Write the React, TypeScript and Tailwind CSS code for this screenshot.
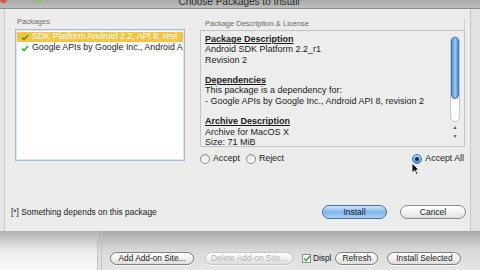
import React from "react";

const font = "font-['Liberation_Sans','Helvetica',sans-serif]";

function Radio({ checked = false, className = "" }: { checked?: boolean; className?: string }) {
  return checked ? (
    <span className={`w-[10px] h-[10px] rounded-full border border-[#3a6fb3] bg-gradient-to-b from-[#b9dcf7] to-[#4b93dc] flex items-center justify-center shrink-0 ${className}`}>
      <span className="w-[4px] h-[4px] rounded-full bg-[#1d2a3a]" />
    </span>
  ) : (
    <span className={`w-[10px] h-[10px] rounded-full border border-[#8d8d8d] bg-gradient-to-b from-[#e2e2e2] to-[#ffffff] shrink-0 ${className}`} />
  );
}

function Check({ white = false }: { white?: boolean }) {
  return (
    <svg width="8" height="7" viewBox="0 0 8 7" className="shrink-0">
      <path d="M1 3.5 L3 5.5 L7 1" fill="none" stroke={white ? "#5b9a12" : "#3fa83a"} strokeWidth="1.6" />
    </svg>
  );
}

function AquaButton({ children, w, disabled = false }: { children: React.ReactNode; w: string; disabled?: boolean }) {
  return (
    <div
      className={`${w} h-[13px] rounded-full border ${disabled ? "border-[#c4c4c4] text-[#b4b4b4]" : "border-[#7d7d7d] text-[#1a1a1a]"} bg-gradient-to-b from-[#ffffff] via-[#f1f1f1] to-[#dcdcdc] flex items-center justify-center text-[8.3px] leading-none shadow-[0_1px_0_rgba(255,255,255,0.7)]`}
    >
      {children}
    </div>
  );
}

export default function App() {
  return (
    <div className={`w-[480px] h-[270px] overflow-hidden relative bg-[#dedede] ${font} text-[#1a1a1a]`}>
      {/* Title bar (cut off) */}
      <div className="h-[9px] relative overflow-hidden bg-gradient-to-b from-[#a9a9a9] to-[#bdbdbd] border-b border-[#8f8f8f] flex justify-center">
        <div className="absolute left-[0px] top-[-4px] w-[7px] h-[7px] rounded-full bg-[#d9534f]" />
        <div className="absolute left-[35px] top-[-4px] w-[7px] h-[7px] rounded-full bg-[#8fc16b]" />
        <span className="text-[10px] leading-none text-[#2a2a2a] -mt-[3px] ml-[-2px]">Choose Packages to Install</span>
      </div>

      {/* Dialog */}
      <div className="h-[222px] flex">
        <div className="w-[4px] bg-[#e6e6e6]" />
        <div className="w-[467px] bg-[#ececec] border-x border-[#c9c9c9] flex flex-col">
          <div className="h-[155px] mt-[9px] flex">
            {/* Packages */}
            <div className="w-[170px] ml-[10px] flex flex-col">
              <div className="h-[11px] pl-[2px] text-[7.5px] leading-[8px] text-[#6a6a6a]">Packages</div>
              <div className="h-[132px] bg-white border border-[#a8bccd] shadow-[inset_0_0_0_1px_#dbe7f0] pt-[2px] px-[1px] flex flex-col">
                <div className="h-[10px] bg-[#f3c546] flex items-center gap-[3px] pl-[4px] text-[8.8px] text-white whitespace-nowrap overflow-hidden">
                  <Check white />
                  <span>SDK Platform Android 2.2, API 8, revi</span>
                </div>
                <div className="h-[12px] flex items-center gap-[3px] pl-[4px] text-[8.8px] whitespace-nowrap overflow-hidden">
                  <Check />
                  <span>Google APIs by Google Inc., Android A</span>
                </div>
              </div>
            </div>

            {/* Description */}
            <div className="w-[265px] ml-[15px] flex flex-col">
              <div className="h-[12px] pl-[5px] pt-[2px] text-[7.5px] leading-[8px] text-[#6a6a6a] border-r border-[#d6d6d6]">
                Package Description &amp; License
              </div>
              <div className="h-[117px] border border-[#c4c4c4] bg-[#ededed] flex">
                <div className="flex-1 pl-[4px] pt-[3px] text-[9px] leading-[10.3px] whitespace-nowrap overflow-hidden">
                  <div className="font-bold underline">Package Description</div>
                  <div>Android SDK Platform 2.2_r1</div>
                  <div>Revision 2</div>
                  <div>&nbsp;</div>
                  <div className="font-bold underline">Dependencies</div>
                  <div>This package is a dependency for:</div>
                  <div>- Google APIs by Google Inc., Android API 8, revision 2</div>
                  <div>&nbsp;</div>
                  <div className="font-bold underline">Archive Description</div>
                  <div>Archive for MacOS X</div>
                  <div>Size: 71 MiB</div>
                </div>
                <div className="w-[10px] mr-[4px] pt-[5px] pb-[4px] flex flex-col">
                  <div className="flex-1 rounded-full bg-white border border-[#c8c8c8] flex flex-col">
                    <div className="h-[62px] rounded-full bg-gradient-to-r from-[#4f8fd6] via-[#9ccaf3] to-[#4f8fd6] border border-[#3f74b3]" />
                  </div>
                  <div className="h-[20px] flex flex-col items-center justify-center gap-[4px] text-[5px] leading-none text-[#555]">
                    <span>▲</span>
                    <span>▼</span>
                  </div>
                </div>
              </div>
              <div className="h-[12px] mt-[6px] flex items-center text-[8.8px]">
                <Radio />
                <span className="ml-[3px]">Accept</span>
                <Radio className="ml-[6px]" />
                <span className="ml-[3px]">Reject</span>
                <Radio checked className="ml-auto" />
                <span className="ml-[3px] mr-[1px]">Accept All</span>
              </div>
            </div>
          </div>

          <div className="h-[16px] mt-[31px] flex items-center">
            <span className="ml-[6px] text-[8.4px]">[*] Something depends on this package</span>
            <div className="ml-auto flex gap-[13px] mr-[4px]">
              <div className="w-[65px] h-[14px] rounded-full border border-[#4a6f9e] bg-gradient-to-b from-[#cfe6fb] via-[#7fb7ec] to-[#a9d3f7] flex items-center justify-center text-[8.5px] leading-none">
                Install
              </div>
              <div className="w-[66px] h-[14px] rounded-full border border-[#8a8a8a] bg-gradient-to-b from-white via-[#f3f3f3] to-[#dedede] flex items-center justify-center text-[8.5px] leading-none">
                Cancel
              </div>
            </div>
          </div>
        </div>
        <div className="flex-1 bg-[#e2e2e2]" />
      </div>

      {/* Background window */}
      <div className="h-[39px] flex bg-gradient-to-b from-[#a8a8a8] via-[#dadada] to-[#e6e6e6]">
        <div className="w-[98px] bg-gradient-to-b from-[#b0b0b0] via-[#ececec] to-[#fafafa] border-r border-[#c4c4c4]" />
        <div className="w-[4px] border-r border-[#c4c4c4]" />
        <div className="flex-1 flex items-end pb-[5px] pl-[8px]">
          <AquaButton w="w-[84px]">Add Add-on Site...</AquaButton>
          <div className="ml-[11px]">
            <AquaButton w="w-[88px]" disabled>Delete Add-on Site...</AquaButton>
          </div>
          <div className="ml-[9px] h-[13px] flex items-center gap-[2px] text-[8.3px]">
            <span className="w-[9px] h-[9px] border border-[#8a8a8a] bg-white flex items-center justify-center">
              <Check />
            </span>
            <span>Displ</span>
          </div>
          <div className="ml-[4px]">
            <AquaButton w="w-[43px]">Refresh</AquaButton>
          </div>
          <div className="ml-[9px]">
            <AquaButton w="w-[74px]">Install Selected</AquaButton>
          </div>
        </div>
      </div>

      {/* Mouse cursor */}
      <svg className="absolute left-[411px] top-[162px]" width="9" height="13" viewBox="0 0 9 13">
        <path d="M1 1 L1 11 L3.5 8.5 L5.5 12.5 L7 11.8 L5 8 L8 8 Z" fill="#111" stroke="#fff" strokeWidth="0.8" />
      </svg>
    </div>
  );
}
